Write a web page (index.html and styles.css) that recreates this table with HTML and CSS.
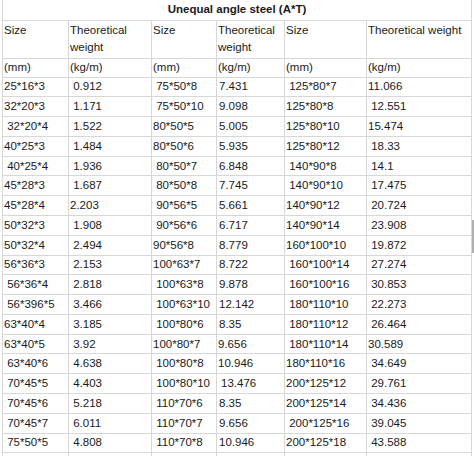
FILE: index.html
```html
<!DOCTYPE html>
<html>
<head>
<meta charset="utf-8">
<link rel="stylesheet" href="styles.css">
</head>
<body>
<table class="steel">
<colgroup><col class="c1"><col class="c2"><col class="c3"><col class="c4"><col class="c5"><col class="c6"></colgroup>
<tr class="title"><td colspan="6">Unequal angle steel (A*T)</td></tr>
<tr class="head"><td>Size</td><td>Theoretical weight</td><td>Size</td><td>Theoretical weight</td><td>Size</td><td>Theoretical weight</td></tr>
<tr class="unit"><td>(mm)</td><td>(kg/m)</td><td>(mm)</td><td>(kg/m)</td><td>(mm)</td><td>(kg/m)</td></tr>
<tr class="data"><td>25*16*3</td><td> 0.912</td><td> 75*50*8</td><td>7.431</td><td> 125*80*7</td><td>11.066</td></tr>
<tr class="data"><td>32*20*3</td><td> 1.171</td><td> 75*50*10</td><td>9.098</td><td>125*80*8</td><td> 12.551</td></tr>
<tr class="data"><td> 32*20*4</td><td> 1.522</td><td>80*50*5</td><td>5.005</td><td>125*80*10</td><td>15.474</td></tr>
<tr class="data"><td>40*25*3</td><td> 1.484</td><td>80*50*6</td><td>5.935</td><td>125*80*12</td><td> 18.33</td></tr>
<tr class="data"><td> 40*25*4</td><td> 1.936</td><td> 80*50*7</td><td>6.848</td><td> 140*90*8</td><td> 14.1</td></tr>
<tr class="data"><td>45*28*3</td><td> 1.687</td><td> 80*50*8</td><td>7.745</td><td> 140*90*10</td><td> 17.475</td></tr>
<tr class="data"><td>45*28*4</td><td>2.203</td><td> 90*56*5</td><td>5.661</td><td>140*90*12</td><td> 20.724</td></tr>
<tr class="data"><td>50*32*3</td><td> 1.908</td><td> 90*56*6</td><td>6.717</td><td>140*90*14</td><td> 23.908</td></tr>
<tr class="data"><td>50*32*4</td><td> 2.494</td><td>90*56*8</td><td>8.779</td><td>160*100*10</td><td> 19.872</td></tr>
<tr class="data"><td>56*36*3</td><td> 2.153</td><td>100*63*7</td><td>8.722</td><td> 160*100*14</td><td> 27.274</td></tr>
<tr class="data"><td> 56*36*4</td><td> 2.818</td><td> 100*63*8</td><td>9.878</td><td> 160*100*16</td><td> 30.853</td></tr>
<tr class="data"><td> 56*396*5</td><td> 3.466</td><td> 100*63*10</td><td>12.142</td><td> 180*110*10</td><td> 22.273</td></tr>
<tr class="data"><td>63*40*4</td><td> 3.185</td><td> 100*80*6</td><td>8.35</td><td> 180*110*12</td><td> 26.464</td></tr>
<tr class="data"><td>63*40*5</td><td> 3.92</td><td>100*80*7</td><td class="tight">9.656</td><td> 180*110*14</td><td>30.589</td></tr>
<tr class="data"><td> 63*40*6</td><td> 4.638</td><td> 100*80*8</td><td class="tight">10.946</td><td>180*110*16</td><td> 34.649</td></tr>
<tr class="data"><td> 70*45*5</td><td> 4.403</td><td> 100*80*10</td><td class="wide">13.476</td><td>200*125*12</td><td> 29.761</td></tr>
<tr class="data"><td> 70*45*6</td><td> 5.218</td><td> 110*70*6</td><td>8.35</td><td>200*125*14</td><td> 34.436</td></tr>
<tr class="data"><td> 70*45*7</td><td> 6.011</td><td> 110*70*7</td><td>9.656</td><td> 200*125*16</td><td> 39.045</td></tr>
<tr class="data"><td> 75*50*5</td><td> 4.808</td><td> 110*70*8</td><td>10.946</td><td>200*125*18</td><td> 43.588</td></tr>
<tr class="data"><td></td><td></td><td></td><td></td><td></td><td></td></tr>
</table>
<div class="scrollbar"></div>
</body>
</html>
```

FILE: styles.css
```css
html, body {
  margin: 0;
  padding: 0;
  background: #ffffff;
}

body {
  position: relative;
  width: 474px;
  height: 456px;
  overflow: hidden;
  font-family: "Liberation Sans", Arial, sans-serif;
  font-size: 11.5px;
  color: #1a1a1a;
}

.steel {
  border-collapse: collapse;
  table-layout: fixed;
  width: 469px;
  margin-left: 2px;
}

.c1 { width: 66px; }
.c2 { width: 83px; }
.c3 { width: 65px; }
.c4 { width: 68px; }
.c5 { width: 82px; }
.c6 { width: 105px; }

.steel td {
  border: 1px solid #d7d7d7;
  padding: 0 1px;
  line-height: 17px;
  white-space: pre-wrap;
  vertical-align: middle;
  overflow: hidden;
}

.title { height: 20px; }
.title td {
  border-top: none;
  text-align: center;
  font-weight: bold;
}

.head { height: 38px; }
.head td {
  vertical-align: top;
  padding-top: 1px;
}

.unit { height: 19px; }

.data { height: 19.79px; }
.data td:nth-child(4) { padding-left: 2px; }
.data td.tight { padding-left: 1px; }
.data td.wide { padding-left: 4px; }

.scrollbar {
  position: absolute;
  left: 472px;
  top: 220px;
  width: 2px;
  height: 33px;
  background: #b0b0b0;
}
```
